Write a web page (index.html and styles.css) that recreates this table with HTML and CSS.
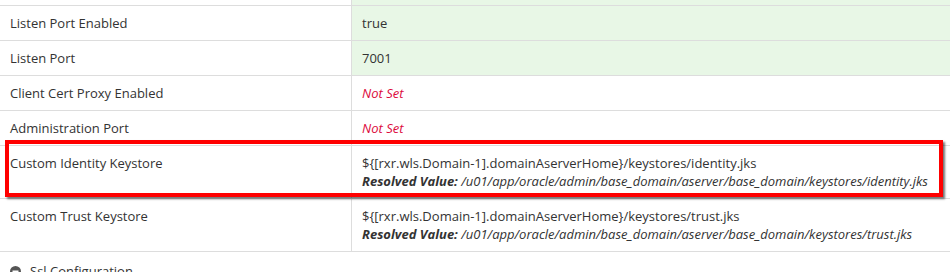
FILE: index.html
```html
<!DOCTYPE html>
<html>
<head>
<meta charset="utf-8">
<link rel="stylesheet" href="styles.css">
</head>
<body>
<div class="props">
  <div class="row top"><div class="cell name"></div><div class="cell val green"></div></div>
  <div class="row"><div class="cell name">Listen Port Enabled</div><div class="cell val green">true</div></div>
  <div class="row"><div class="cell name">Listen Port</div><div class="cell val green">7001</div></div>
  <div class="row"><div class="cell name">Client Cert Proxy Enabled</div><div class="cell val"><span class="notset">Not Set</span></div></div>
  <div class="row"><div class="cell name">Administration Port</div><div class="cell val"><span class="notset">Not Set</span></div></div>
  <div class="row highlight"><div class="cell name">Custom Identity Keystore</div><div class="cell val"><div>${[rxr.wls.Domain-1].domainAserverHome}/keystores/identity.jks</div><div class="resolved"><b>Resolved Value:</b> /u01/app/oracle/admin/base_domain/aserver/base_domain/keystores/identity.jks</div></div></div>
  <div class="row"><div class="cell name">Custom Trust Keystore</div><div class="cell val"><div>${[rxr.wls.Domain-1].domainAserverHome}/keystores/trust.jks</div><div class="resolved"><b>Resolved Value:</b> /u01/app/oracle/admin/base_domain/aserver/base_domain/keystores/trust.jks</div></div></div>
</div>
<div class="section">
  <svg class="icon" width="11" height="11" viewBox="0 0 11 11"><circle cx="5.5" cy="5.5" r="5.5" fill="#555"/><rect x="2.5" y="4.5" width="6" height="2" fill="#fff"/></svg>
  <span>Ssl Configuration</span>
</div>
</body>
</html>
```
FILE: styles.css
```css
html, body {
  margin: 0;
  padding: 0;
  background: #fff;
}
body {
  font-family: "Open Sans", "Liberation Sans", sans-serif;
  font-size: 13px;
  line-height: 18px;
  color: #333;
  overflow: hidden;
}
.props {
  display: flex;
  flex-direction: column;
}
.row {
  display: grid;
  grid-template-columns: 351px 1fr;
  border-bottom: 1px solid #ddd;
}
.row.top {
  height: 5px;
}
.cell {
  padding: 8px 10px;
}
.row.top .cell {
  padding: 0;
}
.val {
  border-left: 1px solid #ddd;
}
.green {
  background: #e8f7e6;
}
.notset {
  color: #dc0a3c;
  font-style: italic;
}
.resolved {
  font-style: italic;
}
.resolved b {
  font-weight: 700;
}
.highlight {
  position: relative;
}
.highlight::after {
  content: "";
  position: absolute;
  left: 5px;
  right: 7px;
  top: -6px;
  bottom: 1px;
  border: 4px solid #f00;
  box-shadow: 2px 2px 2px rgba(0, 0, 0, 0.55);
  pointer-events: none;
}
.section {
  display: flex;
  align-items: center;
  gap: 9px;
  padding: 10px 10px 0;
}
.icon {
  flex: none;
}
```
